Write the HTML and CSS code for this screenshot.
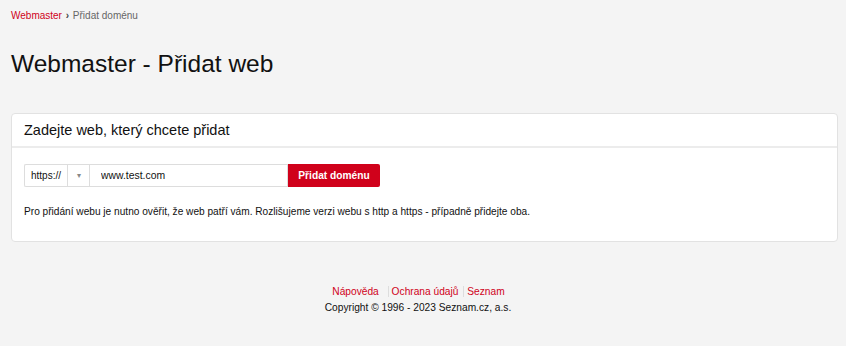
FILE: index.html
```html
<!DOCTYPE html>
<html lang="cs">
<head>
    <meta charset="UTF-8">
    <meta name="viewport" content="width=device-width, initial-scale=1.0">
    <title>Webmaster - Přidat web</title>
    <link rel="stylesheet" href="styles.css">
</head>
<body>
    <nav class="breadcrumb">
        <a href="#">Webmaster</a>
        <span class="sep">&#8250;</span>
        <span class="current">Přidat doménu</span>
    </nav>

    <h1>Webmaster - Přidat web</h1>

    <div class="card">
        <div class="card-header">Zadejte web, který chcete přidat</div>
        <div class="card-body">
            <form class="add-form">
                <div class="protocol">
                    <span class="protocol-value">https://</span>
                    <span class="protocol-arrow">&#9662;</span>
                </div>
                <input type="text" class="domain" value="www.test.com">
                <button type="submit">Přidat doménu</button>
            </form>
            <p class="note">Pro přidání webu je nutno ověřit, že web patří vám. Rozlišujeme verzi webu s http a https - případně přidejte oba.</p>
        </div>
    </div>

    <footer class="footer">
        <div class="footer-links">
            <a href="#" class="first">Nápověda</a>
            <a href="#">Ochrana údajů</a>
            <a href="#">Seznam</a>
        </div>
        <div class="copyright">Copyright &copy; 1996 - 2023 Seznam.cz, a.s.</div>
    </footer>
</body>
</html>
```

FILE: styles.css
```css
/* General */
body {
    font-family: 'Liberation Sans', Arial, sans-serif;
    background-color: #f4f4f4;
    color: #111;
    margin: 0;
    padding: 0 8px 0 11px;
}

a {
    color: #d0021b;
    text-decoration: none;
}

/* Breadcrumb */
.breadcrumb {
    font-size: 10px;
    padding-top: 10px;
    height: 12px;
    line-height: 12px;
}

.breadcrumb .sep {
    color: #444;
    font-weight: bold;
    margin: 0 1px;
}

.breadcrumb .current {
    color: #666;
}

h1 {
    font-size: 24.5px;
    font-weight: normal;
    margin: 27px 0 0;
    line-height: 30px;
    height: 30px;
}

/* Card */
.card {
    margin-top: 34px;
    background-color: #fff;
    border: 1px solid #e2e2e2;
    border-radius: 4px;
}

.card-header {
    font-size: 14.5px;
    padding: 0 12px;
    height: 32px;
    line-height: 32px;
    border-bottom: 2px solid #ececec;
}

.card-body {
    padding: 16px 12px 1px;
}

/* Form */
.add-form {
    display: flex;
    height: 23px;
}

.protocol {
    display: flex;
    border: 1px solid #ddd;
    border-right: none;
    border-radius: 2px 0 0 2px;
    font-size: 10px;
}

.protocol-value {
    width: 42px;
    line-height: 21px;
    text-align: center;
    border-right: 1px solid #ddd;
}

.protocol-arrow {
    width: 21px;
    line-height: 21px;
    text-align: center;
    color: #888;
    font-size: 8px;
}

.domain {
    width: 199px;
    box-sizing: border-box;
    border: 1px solid #ddd;
    margin: 0;
    padding: 0 11px;
    font-family: inherit;
    font-size: 10.4px;
    color: #111;
    outline: none;
}

.add-form button {
    width: 92px;
    background-color: #d0011b;
    color: #fff;
    border: none;
    border-radius: 0 2px 2px 0;
    font-family: inherit;
    font-size: 10.2px;
    font-weight: bold;
    padding: 0;
    cursor: pointer;
}

.note {
    font-size: 10.15px;
    margin: 19px 0 22px;
    line-height: 12px;
}

/* Footer */
.footer {
    text-align: center;
    font-size: 10.2px;
    margin-top: 43px;
    padding-right: 13px;
}

.footer-links {
    line-height: 13px;
}

.footer-links a {
    padding: 0 2px 0 3px;
}

.footer-links a.first {
    padding-right: 6px;
}

.footer-links a + a {
    border-left: 1px solid #ddd;
}

.copyright {
    margin-top: 3px;
    line-height: 13px;
}
```
